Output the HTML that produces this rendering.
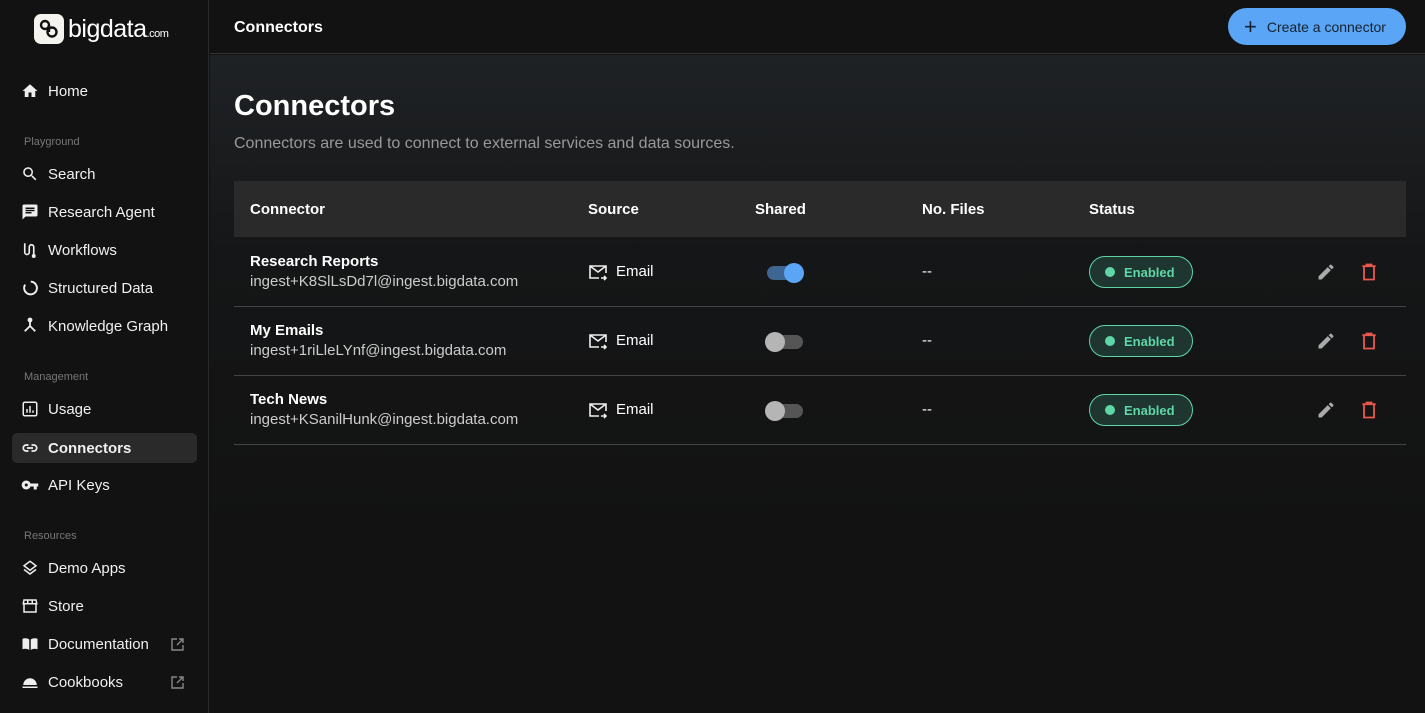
<!DOCTYPE html>
<html><head><meta charset="utf-8"><style>
*{box-sizing:border-box;margin:0;padding:0}
body{width:1425px;height:713px;overflow:hidden;background:#121212;font-family:"Liberation Sans",sans-serif;color:#fff;position:relative}
.sb{position:absolute;left:0;top:0;width:209px;height:713px;background:#121212;border-right:1px solid #2a2a2a}
.logo{position:absolute;left:34px;top:14px;display:flex;align-items:center}
.logo .b{width:30px;height:30px;background:#f5f3ee;border-radius:7px;display:flex;align-items:center;justify-content:center}
.logo .t{font-size:25px;margin-left:4px;letter-spacing:-0.5px}
.logo .t small{font-size:11px}
.it{position:absolute;left:12px;width:185px;height:30px;display:flex;align-items:center;padding-left:9px;font-size:15px;color:#f0f0f0}
.it svg{width:18px;height:18px;margin-right:9px}
.it.act{background:#2a2a2a;border-radius:5px;font-weight:bold}
.sec{position:absolute;left:24px;font-size:11px;color:#777}
.it svg.ext{position:absolute;left:159px;top:9px;width:13px;height:13px;margin:0}
.top{position:absolute;left:210px;top:0;right:0;height:54px;border-bottom:1px solid #333;background:#121212}
.main{position:absolute;left:210px;top:55px;right:0;bottom:0;background:linear-gradient(#1f2225,#151617 200px,#121212 500px)}
.btn{position:absolute;right:19px;top:8px;width:178px;height:37px;background:#5aa5f5;border-radius:19px;color:#15212e;font-size:14px;display:flex;align-items:center;padding-left:16px}
.th{position:absolute;left:234px;top:181px;width:1172px;height:56px;background:#2a2a2a;font-weight:bold;font-size:15px}
.th span,.row span{position:absolute}
.row{position:absolute;left:234px;width:1172px;height:69px;border-bottom:1px solid #444;font-size:15px}
.nm{left:16px;top:15px;font-weight:bold;font-size:15px}
.em{left:16px;top:35px;color:#ccc;font-size:15px}
.badge{position:absolute;left:855px;top:18px;width:104px;height:32px;border:1.5px solid #5ed6a8;border-radius:16px;background:#1f3530;color:#5ed6a8;font-size:13px;font-weight:bold;display:flex;align-items:center;padding-left:34px}
.badge:before{content:"";position:absolute;left:15px;top:10px;width:10px;height:10px;border-radius:50%;background:#5ed6a8}
.tg{position:absolute;left:533px;top:28px;width:36px;height:14px;border-radius:7px}
.kn{position:absolute;top:-3px;width:20px;height:20px;border-radius:50%}
</style></head><body>
<div class="sb">
 <div class="logo"><div class="b"><svg width="22" height="22" viewBox="0 0 22 22" fill="none" stroke="#111" stroke-width="2.4"><circle cx="7" cy="7" r="4"/><circle cx="14" cy="14" r="4.5"/><path d="M11 7v7"/></svg></div><div class="t">bigdata<small>.com</small></div></div>
 <div class="it" style="top:76px"><svg viewBox="0 0 24 24" fill="#eee"><path d="M10 20v-6h4v6h5v-8h3L12 3 2 12h3v8z"/></svg>Home</div>
 <div class="sec" style="top:136px">Playground</div>
 <div class="it" style="top:159px"><svg viewBox="0 0 24 24" fill="#eee"><path d="M15.5 14h-.8l-.3-.3A6.5 6.5 0 1 0 9.5 16c1.6 0 3.1-.6 4.2-1.6l.3.3v.8l5 5 1.5-1.5zm-6 0a4.5 4.5 0 1 1 0-9 4.5 4.5 0 0 1 0 9z"/></svg>Search</div>
 <div class="it" style="top:197px"><svg viewBox="0 0 24 24" fill="#eee"><path d="M20 2H4a2 2 0 0 0-2 2v18l4-4h14a2 2 0 0 0 2-2V4a2 2 0 0 0-2-2zM6 9h12v2H6zm8 5H6v-2h8zm4-6H6V6h12z"/></svg>Research Agent</div>
 <div class="it" style="top:235px"><svg viewBox="0 0 24 24" fill="none" stroke="#eee" stroke-width="2.2"><path d="M5 3v12a3 3 0 0 0 6 0V8a3 3 0 0 1 6 0v10"/><circle cx="17" cy="20" r="1.5" fill="#eee"/></svg>Workflows</div>
 <div class="it" style="top:273px"><svg viewBox="0 0 24 24" fill="none" stroke="#eee" stroke-width="2.6"><path d="M13 3.5a8.5 8.5 0 1 1-7.5 4"/></svg>Structured Data</div>
 <div class="it" style="top:311px"><svg viewBox="0 0 24 24" fill="none" stroke="#eee" stroke-width="2.4"><path d="M12 4v8l-7 7M12 12l7 7"/><circle cx="12" cy="4" r="2" fill="#eee"/></svg>Knowledge Graph</div>
 <div class="sec" style="top:371px">Management</div>
 <div class="it" style="top:394px"><svg viewBox="0 0 24 24" fill="none" stroke="#eee" stroke-width="2"><rect x="3" y="3" width="18" height="18" rx="2"/><path d="M8 17v-5M12 17V8M16 17v-3"/></svg>Usage</div>
 <div class="it act" style="top:433px"><svg viewBox="0 0 24 24" fill="none" stroke="#eee" stroke-width="2.2"><path d="M10 8H7a4 4 0 0 0 0 8h3M14 8h3a4 4 0 0 1 0 8h-3M8 12h8"/></svg>Connectors</div>
 <div class="it" style="top:470px"><svg viewBox="0 0 24 24" fill="#eee"><path d="M12.6 10A6 6 0 1 0 12.6 14H17v4h4v-4h2v-4zM7 14a2 2 0 1 1 0-4 2 2 0 0 1 0 4z"/></svg>API Keys</div>
 <div class="sec" style="top:530px">Resources</div>
 <div class="it" style="top:553px"><svg viewBox="0 0 24 24" fill="none" stroke="#eee" stroke-width="2"><path d="M12 3l8 6-8 6-8-6zM4 14l8 6 8-6"/></svg>Demo Apps</div>
 <div class="it" style="top:591px"><svg viewBox="0 0 24 24" fill="none" stroke="#eee" stroke-width="2"><path d="M4 4h16l1 5H3zM4 9v11h16V9M9 4v5M15 4v5"/></svg>Store</div>
 <div class="it" style="top:629px"><svg viewBox="0 0 24 24" fill="#eee"><path d="M2 5c3-1 6-1 9 1v14c-3-2-6-2-9-1zM13 6c3-2 6-2 9-1v14c-3-1-6-1-9 1z"/></svg>Documentation<svg class="ext" viewBox="0 0 13 13" fill="none" stroke="#888" stroke-width="1.4"><path d="M6 1H1v11h11V7M8 1h4v4M12 1L6 7"/></svg></div>
 <div class="it" style="top:667px"><svg viewBox="0 0 24 24" fill="#eee"><path d="M2 18h20v2H2zM3 16a9 9 0 0 1 18 0z"/></svg>Cookbooks<svg class="ext" viewBox="0 0 13 13" fill="none" stroke="#888" stroke-width="1.4"><path d="M6 1H1v11h11V7M8 1h4v4M12 1L6 7"/></svg></div>
</div>
<div class="top"><div style="position:absolute;left:24px;top:19px;font-size:16px;font-weight:bold">Connectors</div>
 <div class="btn"><span style="font-size:22px;margin-right:10px;font-weight:300">+</span>Create a connector</div></div>
<div class="main"></div>
<div style="position:absolute;left:234px;top:90px;font-size:29px;font-weight:bold">Connectors</div>
<div style="position:absolute;left:234px;top:135px;font-size:16px;color:#999">Connectors are used to connect to external services and data sources.</div>
<div class="th"><span style="left:16px;top:20px">Connector</span><span style="left:354px;top:20px">Source</span><span style="left:521px;top:20px">Shared</span><span style="left:688px;top:20px">No. Files</span><span style="left:855px;top:20px">Status</span></div>

<div class="row" style="top:238px"><span class="nm">Research Reports</span><span class="em">ingest+K8SlLsDd7l@ingest.bigdata.com</span>
<span style="left:354px;top:25px"><svg width="20" height="18" viewBox="0 0 20 18" fill="none" stroke="#eee" stroke-width="1.6"><path d="M11 15H2V3h16v7M2 3l8 6 8-6M13 15h5m-2-2l2 2-2 2"/></svg></span><span style="left:382px;top:25px">Email</span>
<div class="tg" style="background:#3f6592"><div class="kn" style="left:17px;background:#5aa5f5"></div></div>
<span style="left:688px;top:25px">--</span><div class="badge">Enabled</div>
<span style="left:1082px;top:24px"><svg width="20" height="20" viewBox="0 0 24 24" fill="#aaa"><path d="M3 17.2V21h3.8L17.8 9.9l-3.7-3.7zM20.7 7a1 1 0 0 0 0-1.4l-2.3-2.3a1 1 0 0 0-1.4 0l-1.8 1.8 3.7 3.7z"/></svg></span>
<span style="left:1125px;top:24px"><svg width="20" height="20" viewBox="0 0 24 24" fill="none" stroke="#e8574c" stroke-width="2.2"><path d="M4 5h16M9 5V3h6v2M6 5v16h12V5"/></svg></span></div>

<div class="row" style="top:307px"><span class="nm">My Emails</span><span class="em">ingest+1riLleLYnf@ingest.bigdata.com</span>
<span style="left:354px;top:25px"><svg width="20" height="18" viewBox="0 0 20 18" fill="none" stroke="#eee" stroke-width="1.6"><path d="M11 15H2V3h16v7M2 3l8 6 8-6M13 15h5m-2-2l2 2-2 2"/></svg></span><span style="left:382px;top:25px">Email</span>
<div class="tg" style="background:#555"><div class="kn" style="left:-2px;background:#b5b5b5"></div></div>
<span style="left:688px;top:25px">--</span><div class="badge">Enabled</div>
<span style="left:1082px;top:24px"><svg width="20" height="20" viewBox="0 0 24 24" fill="#aaa"><path d="M3 17.2V21h3.8L17.8 9.9l-3.7-3.7zM20.7 7a1 1 0 0 0 0-1.4l-2.3-2.3a1 1 0 0 0-1.4 0l-1.8 1.8 3.7 3.7z"/></svg></span>
<span style="left:1125px;top:24px"><svg width="20" height="20" viewBox="0 0 24 24" fill="none" stroke="#e8574c" stroke-width="2.2"><path d="M4 5h16M9 5V3h6v2M6 5v16h12V5"/></svg></span></div>

<div class="row" style="top:376px"><span class="nm">Tech News</span><span class="em">ingest+KSanilHunk@ingest.bigdata.com</span>
<span style="left:354px;top:25px"><svg width="20" height="18" viewBox="0 0 20 18" fill="none" stroke="#eee" stroke-width="1.6"><path d="M11 15H2V3h16v7M2 3l8 6 8-6M13 15h5m-2-2l2 2-2 2"/></svg></span><span style="left:382px;top:25px">Email</span>
<div class="tg" style="background:#555"><div class="kn" style="left:-2px;background:#b5b5b5"></div></div>
<span style="left:688px;top:25px">--</span><div class="badge">Enabled</div>
<span style="left:1082px;top:24px"><svg width="20" height="20" viewBox="0 0 24 24" fill="#aaa"><path d="M3 17.2V21h3.8L17.8 9.9l-3.7-3.7zM20.7 7a1 1 0 0 0 0-1.4l-2.3-2.3a1 1 0 0 0-1.4 0l-1.8 1.8 3.7 3.7z"/></svg></span>
<span style="left:1125px;top:24px"><svg width="20" height="20" viewBox="0 0 24 24" fill="none" stroke="#e8574c" stroke-width="2.2"><path d="M4 5h16M9 5V3h6v2M6 5v16h12V5"/></svg></span></div>
</body></html>
